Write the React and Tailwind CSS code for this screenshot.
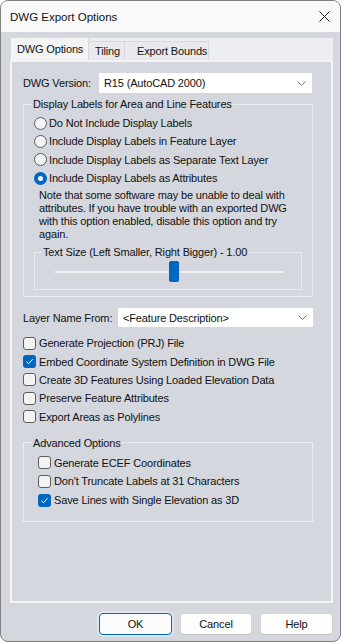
import { useState } from "react";

function Radio({ checked, label }) {
    return (
        <div className="flex items-center gap-[2px] h-[18.3px]">
            {checked ? (
                <span className="w-[13px] h-[13px] rounded-full bg-[#0067c0] flex items-center justify-center">
                    <span className="w-[5px] h-[5px] rounded-full bg-white" />
                </span>
            ) : (
                <span className="w-[13px] h-[13px] rounded-full border border-[#5c5c5c] bg-[#f3f3f3]" />
            )}
            <span>{label}</span>
        </div>
    );
}

function Checkbox({ checked, label }) {
    return (
        <div className="flex items-center gap-[3px] h-[18.3px]">
            {checked ? (
                <span className="w-[13px] h-[13px] rounded-[3px] bg-[#0067c0] flex items-center justify-center">
                    <svg width="9" height="9" viewBox="0 0 9 9" fill="none">
                        <path d="M1.5 4.8 L3.6 6.8 L7.6 2.2" stroke="white" strokeWidth="1" />
                    </svg>
                </span>
            ) : (
                <span className="w-[13px] h-[13px] rounded-[3px] border border-[#5c5c5c] bg-[#f3f3f3]" />
            )}
            <span>{label}</span>
        </div>
    );
}

function Dropdown({ value, className }) {
    return (
        <div className={"bg-white flex items-center justify-between pl-[5px] pr-[6px] " + className}>
            <span>{value}</span>
            <svg width="9" height="5" viewBox="0 0 9 5" fill="none">
                <path d="M0.5 0.5 L4.5 4.5 L8.5 0.5" stroke="#707070" strokeWidth="1" />
            </svg>
        </div>
    );
}

export default function App() {
    const [tab] = useState("DWG Options");

    return (
        <div className="w-[341px] h-[642px] rounded-[8px] border border-[#7f7f7f] bg-[#d4d7de] flex flex-col overflow-hidden text-[11px] tracking-[-0.15px] text-[#111] font-['Liberation_Sans',Arial,sans-serif] leading-[14px]">

            {/* Title bar */}
            <div className="h-[31px] bg-[#f9f9f9] flex items-center justify-between pl-[9px] pr-[10px] shrink-0">
                <span className="text-[11.5px] tracking-normal">DWG Export Options</span>
                <svg width="11" height="11" viewBox="0 0 11 11" fill="none">
                    <path d="M0.5 0.5 L10.5 10.5 M10.5 0.5 L0.5 10.5" stroke="#1a1a1a" strokeWidth="1" />
                </svg>
            </div>

            {/* Tab control */}
            <div className="px-[9px] pt-[6px]">
                <div className="w-[323px] h-[22px] bg-[#eceef1] flex items-end">
                    <div className="w-[79px] h-[23px] -mt-[1px] bg-[#f4f4f5] border border-b-0 border-[#d6d8dc] pl-[6px] flex items-center">
                        {tab}
                    </div>
                    <div className="w-[36px] h-[19px] border-t border-r border-[#d6d8dc] bg-[#e9eaed] pl-[6px] flex items-center">
                        Tiling
                    </div>
                    <div className="w-[84px] h-[19px] border-t border-r border-[#d6d8dc] bg-[#e9eaed] pl-[12px] flex items-center">
                        Export Bounds
                    </div>
                </div>

                {/* Panel */}
                <div className="w-[323px] h-[543px] border-2 border-[#f4f4f5] bg-[#d4d7de] pl-[11px] pt-[11px]">

                    <div className="flex items-center h-[20px]">
                        <span className="w-[76px]">DWG Version:</span>
                        <Dropdown value="R15 (AutoCAD 2000)" className="w-[213px] h-[20px]" />
                    </div>

                    <fieldset className="mt-[4px] w-[290px] border border-[#e8eaee] pl-[10px] pb-[6px]">
                        <legend className="ml-[-2px] px-[1px]">Display Labels for Area and Line Features</legend>
                        <div className="pt-[3px]">
                            <Radio label="Do Not Include Display Labels" />
                            <Radio label="Include Display Labels in Feature Layer" />
                            <Radio label="Include Display Labels as Separate Text Layer" />
                            <Radio checked label="Include Display Labels as Attributes" />
                        </div>
                        <p className="mt-[2px] pl-[5px] leading-[13px] whitespace-nowrap">
                            Note that some software may be unable to deal with<br />
                            attributes. If you have trouble with an exported DWG<br />
                            with this option enabled, disable this option and try<br />
                            again.
                        </p>

                        <fieldset className="mt-[4px] w-[268px] border border-[#e8eaee]">
                            <legend className="ml-[7px] px-[1px]">Text Size (Left Smaller, Right Bigger) - 1.00</legend>
                            <div className="relative h-[30px]">
                                <div className="absolute left-[20px] top-[12px] w-[228px] h-[2px] bg-[#eff0f2]" />
                                <div className="absolute left-[134px] top-[2px] w-[10px] h-[21px] rounded-[2px] bg-[#0067c0]" />
                            </div>
                        </fieldset>
                    </fieldset>

                    <div className="mt-[11px] flex items-center h-[19px]">
                        <span className="w-[95px]">Layer Name From:</span>
                        <Dropdown value="<Feature Description>" className="w-[195px] h-[19px]" />
                    </div>

                    <div className="mt-[7px]">
                        <Checkbox label="Generate Projection (PRJ) File" />
                        <Checkbox checked label="Embed Coordinate System Definition in DWG File" />
                        <Checkbox label="Create 3D Features Using Loaded Elevation Data" />
                        <Checkbox label="Preserve Feature Attributes" />
                        <Checkbox label="Export Areas as Polylines" />
                    </div>

                    <fieldset className="mt-[10px] w-[290px] border border-[#e8eaee] pl-[14px] pb-[11px]">
                        <legend className="ml-[-6px] px-[1px]">Advanced Options</legend>
                        <div className="pt-[4px]">
                            <Checkbox label="Generate ECEF Coordinates" />
                            <Checkbox label="Don't Truncate Labels at 31 Characters" />
                            <div className="mt-[1px]">
                                <Checkbox checked label="Save Lines with Single Elevation as 3D" />
                            </div>
                        </div>
                    </fieldset>
                </div>
            </div>

            {/* Buttons */}
            <div className="mt-[10px] pr-[7px] flex justify-end gap-[8px]">
                <button className="w-[73px] h-[22px] rounded-[4px] border border-[#0067c0] bg-[#fbfbfb] ring-2 ring-[#dbe6f1]">
                    OK
                </button>
                <button className="w-[72px] h-[22px] rounded-[4px] border border-[#d3d3d3] border-b-[#bfbfbf] bg-[#fdfdfd]">
                    Cancel
                </button>
                <button className="w-[73px] h-[22px] rounded-[4px] border border-[#d3d3d3] border-b-[#bfbfbf] bg-[#fdfdfd]">
                    Help
                </button>
            </div>
        </div>
    );
}
